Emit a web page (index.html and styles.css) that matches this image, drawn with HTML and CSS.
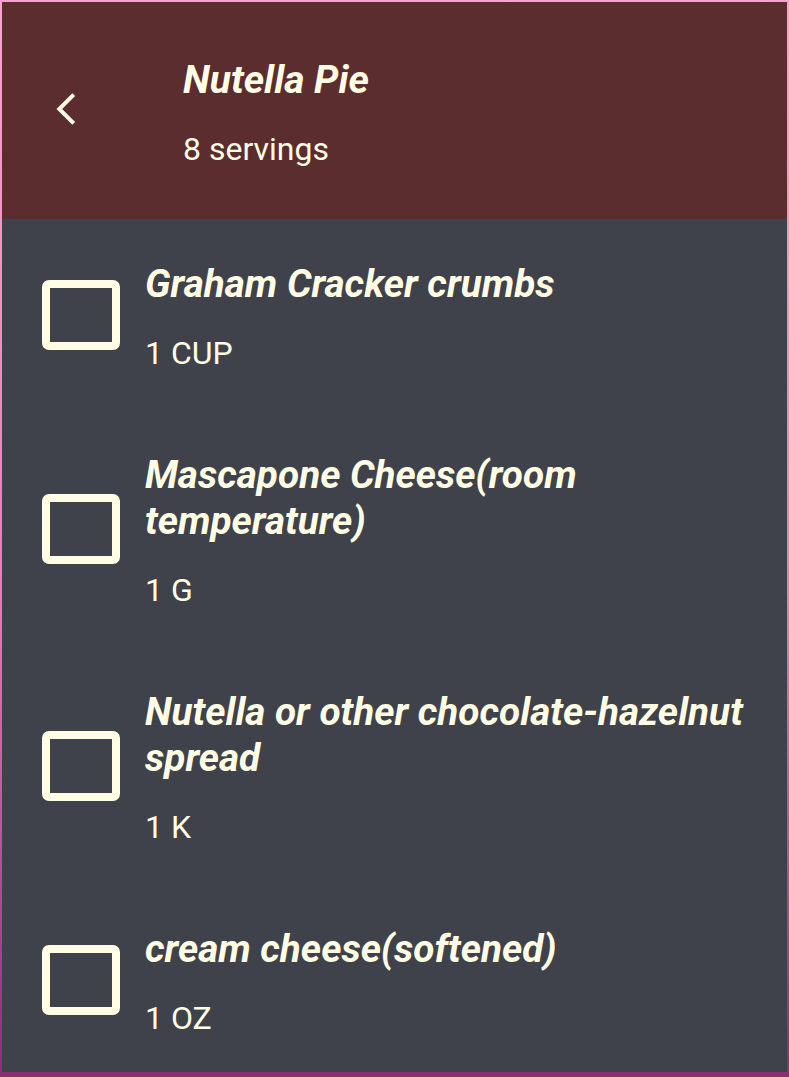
FILE: index.html
```html
<!DOCTYPE html>
<html lang="en">
<head>
<meta charset="utf-8">
<title>Nutella Pie</title>
<link rel="stylesheet" href="styles.css">
</head>
<body>
<div class="app">
  <header class="header">
    <button class="back" aria-label="Back">
      <svg viewBox="0 0 24 24" width="38" height="38"><path d="M17.77 3.77 16 2 6 12l10 10 1.77-1.77L9.54 12z" fill="#fffde4"/></svg>
    </button>
    <div class="titles">
      <h1 class="title">Nutella Pie</h1>
      <p class="subtitle">8 servings</p>
    </div>
  </header>
  <ul class="list">
    <li class="row">
      <span class="check"></span>
      <div class="info">
        <div class="name">Graham Cracker crumbs</div>
        <div class="qty">1 CUP</div>
      </div>
    </li>
    <li class="row">
      <span class="check"></span>
      <div class="info">
        <div class="name">Mascapone Cheese(room temperature)</div>
        <div class="qty">1 G</div>
      </div>
    </li>
    <li class="row">
      <span class="check"></span>
      <div class="info">
        <div class="name">Nutella or other chocolate-hazelnut spread</div>
        <div class="qty">1 K</div>
      </div>
    </li>
    <li class="row">
      <span class="check"></span>
      <div class="info">
        <div class="name">cream cheese(softened)</div>
        <div class="qty">1 OZ</div>
      </div>
    </li>
  </ul>
</div>
</body>
</html>
```

FILE: styles.css
```css
* { box-sizing: border-box; }
html, body { height: 100%; }
body {
  margin: 0;
  padding: 2px 2px 5px 2px;
  background: linear-gradient(180deg, #f6a6cc 0%, #e57fb4 55%, #8a2f74 100%);
  font-family: Roboto, "Noto Sans", sans-serif;
  color: #fffde4;
  overflow: hidden;
}
.app {
  height: 100%;
  background: #3f424a;
  display: flex;
  flex-direction: column;
}
.header {
  height: 217px;
  flex: none;
  background: #5b2d2f;
  display: flex;
  align-items: flex-start;
}
.back {
  border: 0;
  background: none;
  padding: 0;
  margin: 88px 0 0 45px;
  width: 38px;
  height: 38px;
  display: flex;
}
.titles {
  margin-left: 98px;
  padding-top: 55px;
}
.title {
  margin: 0;
  font-size: 39px;
  line-height: 46px;
  font-weight: 700;
  font-style: italic;
}
.subtitle {
  margin: 27px 0 0;
  font-size: 32px;
  line-height: 38px;
}
.list {
  list-style: none;
  margin: 0;
  padding: 0;
}
.row {
  display: flex;
  align-items: center;
  padding: 38px 30px 38px 40px;
  gap: 25px;
}
.check {
  flex: none;
  width: 78px;
  height: 70px;
  border: 8px solid #fffde4;
  border-radius: 7px;
}
.info {
  display: flex;
  flex-direction: column;
  padding-top: 4px;
}
.name {
  font-size: 38.7px;
  line-height: 46px;
  font-weight: 700;
  font-style: italic;
}
.qty {
  margin-top: 27px;
  font-size: 32px;
  line-height: 38px;
}
```
